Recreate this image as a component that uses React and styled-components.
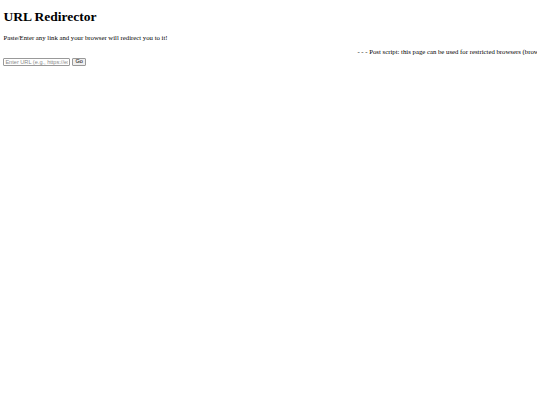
import React from "react";
import styled, { createGlobalStyle } from "styled-components";

const GlobalStyle = createGlobalStyle`
  html, body {
    margin: 0;
    padding: 0;
    background: #ffffff;
  }
  body {
    padding: 0.4px 3.4px;
    font-family: "Liberation Serif", "Times New Roman", serif;
    font-size: 6.75px;
    color: #000000;
  }
`;

const Title = styled.h1`
  font-size: 13.5px;
  font-weight: bold;
  margin: 9px 0;
`;

const Text = styled.p`
  margin: 6.75px 0;
`;

const Ticker = styled.div`
  overflow: hidden;
  white-space: nowrap;
  padding-left: 354px;
`;

const Form = styled.form`
  display: flex;
  align-items: center;
  gap: 1.5px;
  margin-top: 3px;
`;

const UrlInput = styled.input`
  box-sizing: border-box;
  width: 67px;
  height: 8px;
  padding: 0 1px;
  border: 1px solid #999999;
  border-radius: 1px;
  font-family: "Liberation Sans", Arial, sans-serif;
  font-size: 5.6px;
  &::placeholder {
    color: #8a8a8a;
  }
`;

const GoButton = styled.button`
  box-sizing: border-box;
  height: 8px;
  padding: 0 2.5px;
  border: 1px solid #999999;
  border-radius: 1px;
  background: #efefef;
  font-family: "Liberation Sans", Arial, sans-serif;
  font-size: 5.6px;
  line-height: 1;
  color: #000;
`;

export default function App() {
  const go = (e) => {
    e.preventDefault();
  };
  return (
    <>
      <GlobalStyle />
      <Title>URL Redirector</Title>
      <Text>Paste/Enter any link and your browser will redirect you to it!</Text>
      <Ticker>
        - - - Post script: this page can be used for restricted browsers (browsers that block certain websites)
      </Ticker>
      <Form onSubmit={go}>
        <UrlInput type="text" placeholder="Enter URL (e.g., https://example.com)" />
        <GoButton type="submit">Go</GoButton>
      </Form>
    </>
  );
}
